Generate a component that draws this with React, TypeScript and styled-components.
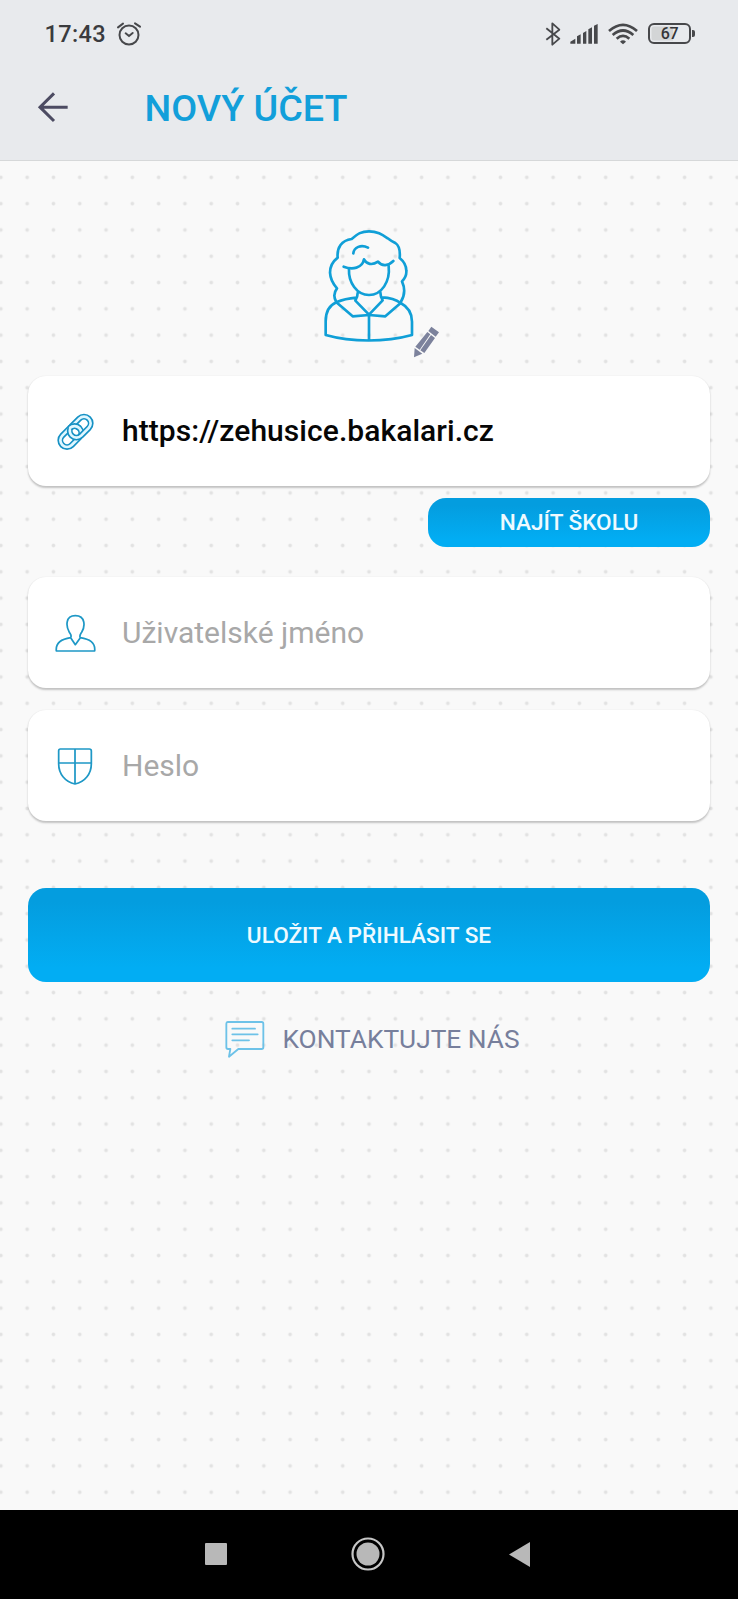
import React from "react";
import styled, { createGlobalStyle } from "styled-components";

const GlobalStyle = createGlobalStyle`
  * { box-sizing: border-box; }
  body { margin: 0; background: #f9f9f9; font-family: Roboto, "Liberation Sans", sans-serif; }
  svg { display: block; flex: none; }
`;

const Screen = styled.div`
  width: 738px;
  height: 1599px;
  display: flex;
  flex-direction: column;
  overflow: hidden;
`;

const Header = styled.header`
  height: 161px;
  flex: none;
  background: #e8eaed;
  border-bottom: 1px solid #d6d8d9;
  box-shadow: 0 1px 1px #ececec;
`;

const StatusBar = styled.div`
  height: 68px;
  padding: 0 43.5px 0 44.5px;
  display: flex;
  align-items: center;
  color: #3a3b3e;
`;

const Clock = styled.span`
  font-size: 23.5px;
  font-weight: 500;
  letter-spacing: 0.35px;
  line-height: 28px;
  width: 71px;
  white-space: nowrap;
`;

const StatusIcons = styled.div`
  margin-left: auto;
  display: flex;
  align-items: center;
`;

const Battery = styled.div`
  display: flex;
  align-items: center;
  margin-left: 10.5px;
  margin-top: -1px;
`;

const BatteryBody = styled.div`
  width: 43px;
  height: 21px;
  border: 2.5px solid #47484b;
  border-radius: 6px;
  background: linear-gradient(90deg, #d3d5d6 0 60%, #e8eaed 60%);
  background-clip: padding-box;
  box-shadow: inset 0 0 0 1.5px #e8eaed;
  color: #333437;
  font-size: 16px;
  line-height: 18px;
  font-weight: 500;
  letter-spacing: -0.4px;
  text-align: center;
`;

const BatteryTip = styled.div`
  width: 2.5px;
  height: 7px;
  margin-left: 1px;
  border-radius: 0 2px 2px 0;
  background: #47484b;
`;

const TitleBar = styled.div`
  height: 78px;
  padding-left: 36px;
  display: flex;
  align-items: center;
`;

const Title = styled.h1`
  margin: 1px 0 0 75.5px;
  font-size: 37.7px;
  line-height: 44px;
  font-weight: 500;
  color: #129fda;
  white-space: nowrap;
`;

const Content = styled.main`
  flex: 1;
  padding: 65.67px 28px 0;
  display: flex;
  flex-direction: column;
  background-color: #f9f9f9;
  background-image: radial-gradient(circle, #e2e2e2 1.1px, rgba(226, 226, 226, 0) 2.4px);
  background-size: 26.3px 26.3px;
  background-position: -12.3px 3.2px;
`;

const Avatar = styled.div`
  position: relative;
  width: 100px;
  height: 116.67px;
  margin: 0 0 32.66px 292px;
`;

const EditBadge = styled.span`
  position: absolute;
  left: 92px;
  top: 99px;
`;

const Field = styled.div<{ $gap: number }>`
  height: 110.5px;
  flex: none;
  margin-bottom: ${(p) => p.$gap}px;
  padding-left: 26px;
  display: flex;
  align-items: center;
  border-radius: 18px;
  background: #fff;
  box-shadow: 0 1.5px 2px rgba(0, 0, 0, 0.22), 0 0 1px rgba(0, 0, 0, 0.06);
`;

const FieldIcon = styled.span`
  width: 68px;
  flex: none;
`;

const FieldText = styled.span<{ $filled?: boolean }>`
  font-size: 30px;
  line-height: 36px;
  letter-spacing: ${(p) => (p.$filled ? 0.06 : 0)}px;
  font-weight: ${(p) => (p.$filled ? 500 : 400)};
  color: ${(p) => (p.$filled ? "#060606" : "#a8a8a8")};
  white-space: nowrap;
`;

const Button = styled.button<{ $small?: boolean }>`
  flex: none;
  align-self: ${(p) => (p.$small ? "flex-end" : "stretch")};
  width: ${(p) => (p.$small ? "282px" : "auto")};
  height: ${(p) => (p.$small ? 49 : 94)}px;
  margin: 0 0 ${(p) => (p.$small ? 30.5 : 35)}px;
  padding: 2px 0 0;
  border: 0;
  border-radius: 18px;
  background: linear-gradient(#049ddf 15%, #02adf3 85%);
  color: #eefaff;
  font: 500 22.6px/26px Roboto, "Liberation Sans", sans-serif;
  white-space: nowrap;
`;

const Contact = styled.a`
  height: 44px;
  padding-left: 197px;
  display: flex;
  align-items: center;
  gap: 17.5px;
  color: #777f9c;
  font-size: 26.3px;
  line-height: 32px;
  white-space: nowrap;

  svg { margin-top: 1px; }
`;

const NavBar = styled.nav`
  height: 89.5px;
  flex: none;
  padding: 0 207px 0 205px;
  display: flex;
  align-items: center;
  justify-content: space-between;
  background: #000;
`;

const AlarmIcon = () => (
  <svg width="26" height="26" viewBox="348 64 78 78" fill="none" stroke="#47484b" strokeWidth="6" strokeLinecap="round">
    <circle cx="387" cy="106" r="28.5" />
    <path d="M354 83 369 72M420 81 405 71M377 101 387 109 398 100" />
  </svg>
);

const BluetoothIcon = () => (
  <svg width="16" height="24" viewBox="76 64 48 72" fill="none" stroke="#47484b" strokeWidth="5.5" strokeLinejoin="round">
    <path d="M80 83 119 114 98 132V68L119 87 80 117" />
  </svg>
);

const SignalIcon = () => (
  <svg width="28" height="20" viewBox="149 70 84 60" fill="#47484b" style={{ marginLeft: 8.5 }}>
    <path d="M150 129V123L165 114V129ZM170 129V107L181 101V129ZM188 129V97L198 91V129ZM204 129V86L215 80V129ZM221 129V75L232 70V129Z" />
  </svg>
);

const WifiIcon = () => (
  <svg width="30" height="22" viewBox="263 68 90 66" fill="none" stroke="#47484b" strokeWidth="8" style={{ marginLeft: 10 }}>
    <path d="M266 92Q308 55 350 92M277 104Q308 77 339 104M289 115Q308 98 327 115" />
    <path d="M299 124Q308 116 317 124L308 132Z" fill="#47484b" stroke="none" />
  </svg>
);

const BackIcon = () => (
  <svg width="33" height="32" viewBox="108 273 99 96" fill="none" stroke="#4c4b62" strokeWidth="9">
    <path d="M203 321.500H119M162 280 120 321.500 162 363" />
  </svg>
);

const StudentIcon = () => (
  <svg width="100" height="116.67" viewBox="60 50 300 350" fill="none" stroke="#109fd7" strokeWidth="8" strokeLinecap="round" strokeLinejoin="round">
    <path d="M109 275C100 260 101 247 111 234C101 223 91 207 90 187C90 168 99 153 113 142C110 112 125 90 155 86C174 70 184 63 207 63C231 63 245 72 263 84Q273 92 286 98C298 106 301 122 299 143C310 152 319 165 319 181C320 194 314 205 306 213C316 235 314 257 302 276" />
    <path d="M160 129C162 111 183 101 204 112M131 169C157 179 187 174 192 147C200 162 216 166 234 154C246 169 265 167 280 152" />
    <path d="M147 178C145 215 170 254 207 254C245 254 271 214 266 167" />
    <path d="M173 248C173 259 169 266 166 271L207 313 248 270C244 263 241 257 241 246M169 262C145 264 125 269 109 276L158 318 207 314 256 318 302 278C287 267 267 262 246 261" />
    <path d="M109 276C86 286 77 307 77 333V374C155 396 256 396 336 374V334C336 309 325 290 302 278M207 314V389" />
  </svg>
);

const PencilIcon = () => (
  <svg width="28" height="33" viewBox="336 347 84 99" fill="#7c829c">
    <path d="M394 349 417 366 407 379 385 362ZM382 365 391 372 359 418 346 409ZM393 374 405 383 373 428 361 420ZM344 413 367 430 342 441Z" />
  </svg>
);

const LinkIcon = () => (
  <svg width="42" height="42" viewBox="0 0 126 126" fill="none">
    <g transform="translate(64.5 65.5) rotate(-45)">
      <rect x="-56" y="-20" width="72" height="40" rx="20" stroke="#1691c4" strokeWidth="18" />
      <rect x="-56" y="-20" width="72" height="40" rx="20" stroke="#e0f7ff" strokeWidth="8" />
      <rect x="-16" y="-20" width="72" height="40" rx="20" stroke="#1691c4" strokeWidth="18" />
      <rect x="-16" y="-20" width="72" height="40" rx="20" stroke="#e0f7ff" strokeWidth="8" />
      <path d="M-4 -20A20 20 0 0 1 16 0" stroke="#1691c4" strokeWidth="18" />
      <path d="M-5 -20H-4A20 20 0 0 1 16 0V1" stroke="#e0f7ff" strokeWidth="8" />
    </g>
  </svg>
);

const UserIcon = () => (
  <svg width="42" height="42" viewBox="102 126 126 126" fill="none" stroke="#1e98c6" strokeWidth="5.2" strokeLinejoin="round">
    <path d="M152 203C156 196 152 193 148 187C138 170 135 137 166 137C198 137 195 171 185 187C181 193 177 197 181 203M152 203 166 224 181 203C208 207 227 216 224 243H109C106 216 126 207 152 203Z" />
  </svg>
);

const ShieldIcon = () => (
  <svg width="42" height="42" viewBox="102 526 126 126" fill="none" stroke="#1e98c6" strokeWidth="5.2" strokeLinejoin="round">
    <path d="M121 538H208Q214 538 214 544V582C214 613 194 637 165 643C136 637 116 613 116 582V544Q116 538 121 538ZM165 538V643M116 580H214" />
  </svg>
);

const MessageIcon = () => (
  <svg width="40" height="39" viewBox="75 123 120 117" fill="none" stroke="#6dc2e8" strokeWidth="5.5" strokeLinecap="round" strokeLinejoin="round">
    <path d="M83 129H185Q190 129 190 134V205Q190 210 185 210H115L87 233 91 210H84Q79 210 79 205V134Q79 129 83 129Z" />
    <path d="M97 149H165M97 166H173M97 184H147" />
  </svg>
);

export default function App() {
  return (
    <>
      <GlobalStyle />
      <Screen>
        <Header>
          <StatusBar>
            <Clock>17:43</Clock>
            <AlarmIcon />
            <StatusIcons>
              <BluetoothIcon />
              <SignalIcon />
              <WifiIcon />
              <Battery>
                <BatteryBody>67</BatteryBody>
                <BatteryTip />
              </Battery>
            </StatusIcons>
          </StatusBar>
          <TitleBar>
            <BackIcon />
            <Title>NOVÝ ÚČET</Title>
          </TitleBar>
        </Header>
        <Content>
          <Avatar>
            <StudentIcon />
            <EditBadge>
              <PencilIcon />
            </EditBadge>
          </Avatar>
          <Field $gap={11.5}>
            <FieldIcon>
              <LinkIcon />
            </FieldIcon>
            <FieldText $filled>https://zehusice.bakalari.cz</FieldText>
          </Field>
          <Button $small>NAJÍT ŠKOLU</Button>
          <Field $gap={22.5}>
            <FieldIcon>
              <UserIcon />
            </FieldIcon>
            <FieldText>Uživatelské jméno</FieldText>
          </Field>
          <Field $gap={67.5}>
            <FieldIcon>
              <ShieldIcon />
            </FieldIcon>
            <FieldText>Heslo</FieldText>
          </Field>
          <Button>ULOŽIT A PŘIHLÁSIT SE</Button>
          <Contact>
            <MessageIcon />
            KONTAKTUJTE NÁS
          </Contact>
        </Content>
        <NavBar>
          <svg width="22" height="22" viewBox="0 0 22 22">
            <rect width="22" height="22" rx="1" fill="#b8b8b8" />
          </svg>
          <svg width="34" height="34" viewBox="0 0 34 34">
            <circle cx="17" cy="17" r="15.500" fill="none" stroke="#c6c6c6" strokeWidth="2.200" />
            <circle cx="17" cy="17" r="11.500" fill="#b8b8b8" />
          </svg>
          <svg width="22" height="25" viewBox="0 0 22 25">
            <path d="M0 12.500 21 0V25Z" fill="#b8b8b8" />
          </svg>
        </NavBar>
      </Screen>
    </>
  );
}
